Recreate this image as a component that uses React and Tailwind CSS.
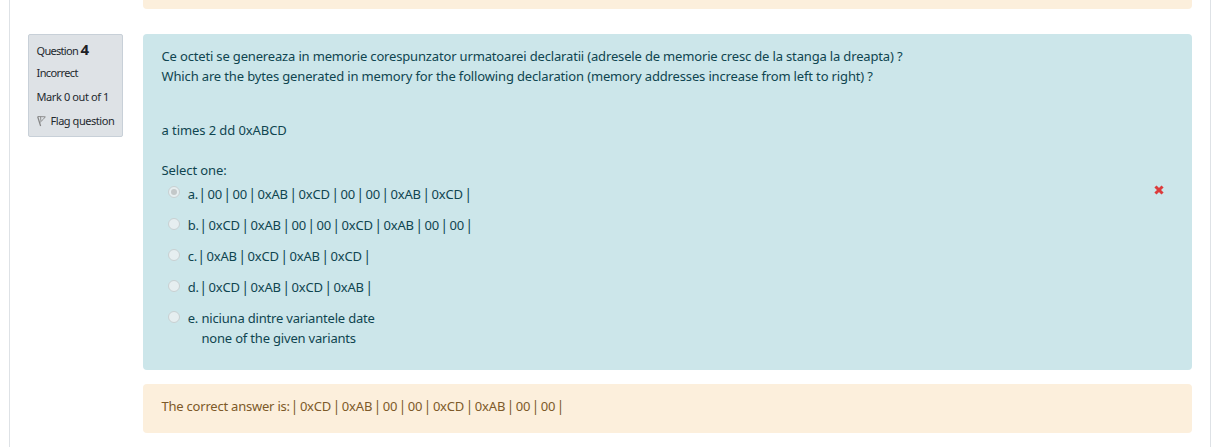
import React from "react";

const CELL_WIDTH = {
  "00": "w-[22px]",
  "0xAB": "w-[38px]",
  "0xCD": "w-[39px]",
};

function Pipe() {
  return <span className="flex w-[3px] shrink-0 justify-center text-[13.5px]">|</span>;
}

function Bytes({ values }) {
  return (
    <span className="flex">
      <Pipe />
      {values.map((value, i) => (
        <React.Fragment key={i}>
          <span className={`flex shrink-0 justify-center tracking-[-0.2px] ${CELL_WIDTH[value]}`}>{value}</span>
          <Pipe />
        </React.Fragment>
      ))}
    </span>
  );
}

function Radio({ checked }) {
  return (
    <span className={`flex size-[12px] shrink-0 items-center justify-center rounded-full border border-[#c8d0d2] bg-[#e6eef0] ${checked ? "mt-[5px]" : "mt-[6px]"}`}>
      {checked && <span className="size-[6px] rounded-full bg-[#c3c8c9]" />}
    </span>
  );
}

const OPTIONS = [
  { letter: "a.", gap: "w-[13px]", values: ["00", "00", "0xAB", "0xCD", "00", "00", "0xAB", "0xCD"] },
  { letter: "b.", gap: "w-[14px]", values: ["0xCD", "0xAB", "00", "00", "0xCD", "0xAB", "00", "00"] },
  { letter: "c.", gap: "w-[12px]", values: ["0xAB", "0xCD", "0xAB", "0xCD"] },
  { letter: "d.", gap: "w-[14px]", values: ["0xCD", "0xAB", "0xCD", "0xAB"] },
];

function Option({ checked, letter, gap, children }) {
  return (
    <div className="flex pl-[6.4px]">
      <Radio checked={checked} />
      <div className="ml-[7.8px] flex pt-[3px]">
        <span className={`shrink-0 tracking-[-0.2px] ${gap}`}>{letter}</span>
        {children}
      </div>
    </div>
  );
}

function QuestionInfo() {
  return (
    <aside className="h-[103px] w-[95px] shrink-0 rounded-[2px] border border-[#c8d0d8] bg-[#dee2e6] pl-[7.5px] text-[11px] leading-[24px] whitespace-nowrap text-[#24292e]">
      <div className="mt-[2px] flex h-[24px] items-baseline">
        <span className="tracking-[-0.7px]">Question</span>
        <span className="ml-[2.5px] text-[15px] font-bold text-[#1d2125]">4</span>
      </div>
      <div className="tracking-[-0.6px]">Incorrect</div>
      <div className="tracking-[-0.4px]">Mark 0 out of 1</div>
      <div className="flex items-center">
        <svg className="mr-[5px] h-[12px] w-[9px]" viewBox="0 0 9 12" fill="none" stroke="#858585">
          <path d="M0.6 1.5 L3.6 11" strokeWidth="1.2" />
          <path d="M1 1.5 L8.3 1.8 L6.2 4.4 L3 7.4 M3.6 1.8 L3.8 5.8" strokeWidth="0.9" />
        </svg>
        <span className="tracking-[-0.45px]">Flag question</span>
      </div>
    </aside>
  );
}

export default function App() {
  return (
    <div className="h-[447px] overflow-hidden bg-white px-[9px] font-['Noto_Sans','Open_Sans',sans-serif] text-[13px] leading-[20px] whitespace-nowrap">
      <main className="h-full w-[1202px] border-x border-[#dee2e6] pl-[18px]">
        <div className="ml-[115px] h-[9px] w-[1049px] rounded-b-[4px] bg-[#fcefdc]" />
        <div className="mt-[25px] flex gap-[20px]">
          <QuestionInfo />
          <div className="w-[1049px] shrink-0">
            <section className="h-[336px] rounded-[4px] bg-[#cce6ea] pt-[12px] pl-[18.5px] text-[#0f4550]">
              <p className="tracking-[-0.163px]">
                Ce octeti se genereaza in memorie corespunzator urmatoarei declaratii (adresele de memorie cresc de la stanga la dreapta) ?
              </p>
              <p className="tracking-[-0.147px]">
                Which are the bytes generated in memory for the following declaration (memory addresses increase from left to right) ?
              </p>
              <p className="mt-[34px] tracking-[-0.08px]">a times 2 dd 0xABCD</p>
              <p className="mt-[20px] tracking-[-0.1px]">Select one:</p>
              <div className="flex pt-px">
                <div className="flex w-[992.5px] flex-col gap-[8px]">
                  {OPTIONS.map((option, i) => (
                    <Option key={option.letter} checked={i === 0} letter={option.letter} gap={option.gap}>
                      <Bytes values={option.values} />
                    </Option>
                  ))}
                  <Option letter="e." gap="w-[13.8px]">
                    <div className="tracking-[-0.19px]">
                      <p>niciuna dintre variantele date</p>
                      <p>none of the given variants</p>
                    </div>
                  </Option>
                </div>
                <svg className="mt-[4px] size-[10px]" viewBox="0 0 10 10" stroke="#dc3c3c" strokeWidth="3" strokeLinecap="square">
                  <path d="M2.5 2.5 L7.5 7.5 M7.5 2.5 L2.5 7.5" />
                </svg>
              </div>
            </section>
            <section className="mt-[14px] flex h-[49px] rounded-[4px] bg-[#fcefdc] pt-[12px] pl-[18.5px] text-[#7d5a29]">
              <span className="w-[131.5px] shrink-0 tracking-[-0.22px]">The correct answer is:</span>
              <Bytes values={["0xCD", "0xAB", "00", "00", "0xCD", "0xAB", "00", "00"]} />
            </section>
          </div>
        </div>
      </main>
    </div>
  );
}
